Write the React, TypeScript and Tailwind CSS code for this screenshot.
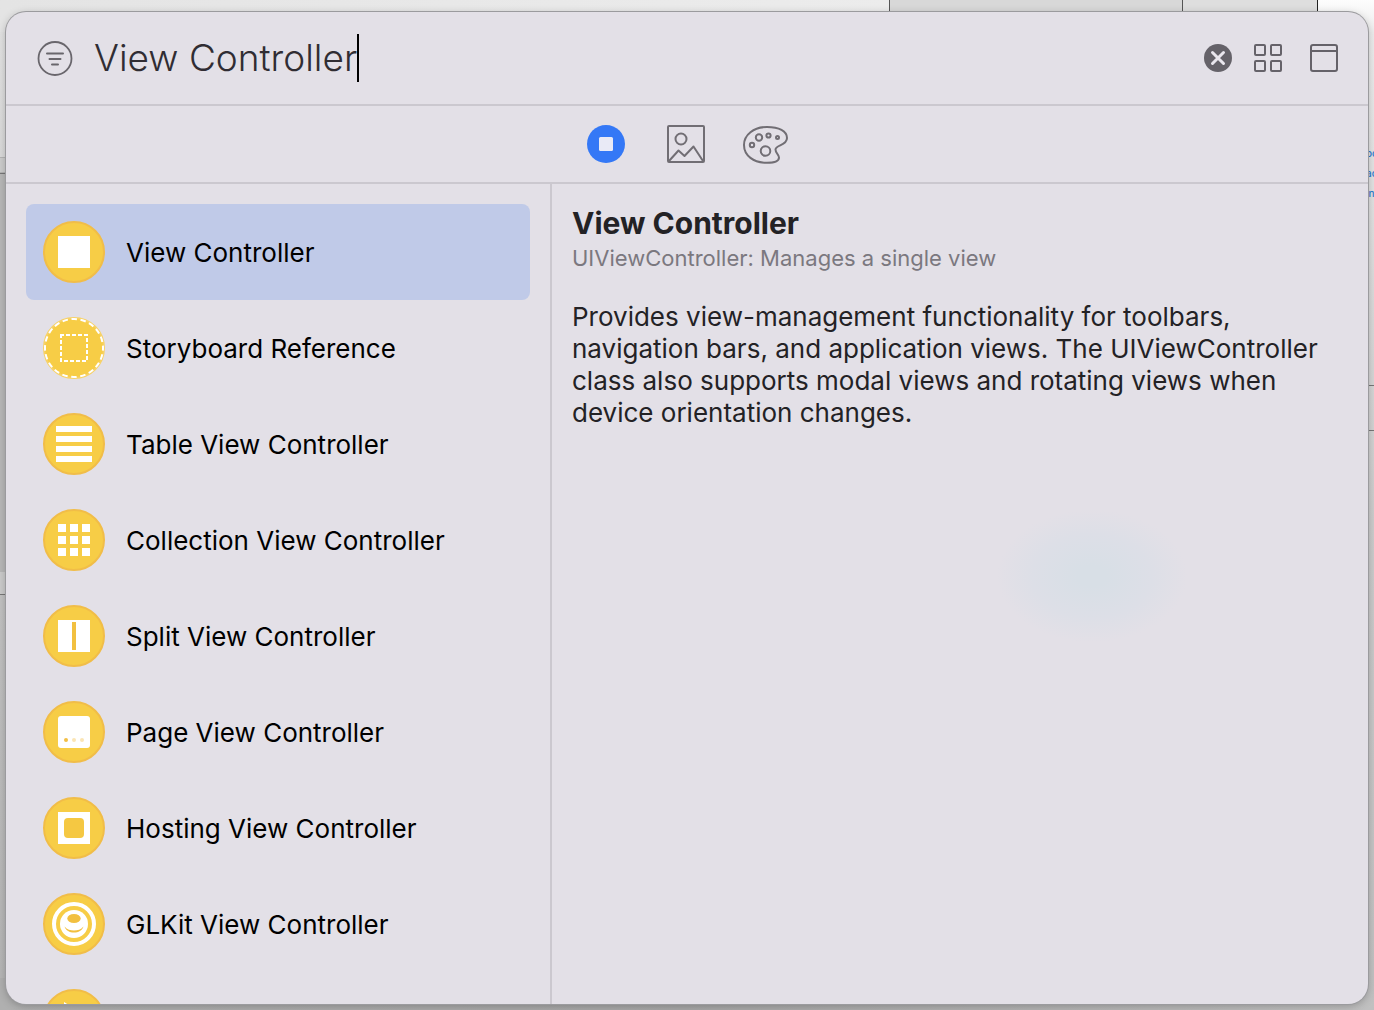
import { useState } from "react";
import type { ReactNode } from "react";

const items: { name: string; glyph: ReactNode; dashed?: boolean; iconOnly?: boolean }[] = [
  { name: "View Controller", glyph: <rect x="16" y="16" width="32" height="32" fill="#fff" /> },
  {
    name: "Storyboard Reference",
    dashed: true,
    glyph: (
      <rect x="19" y="19" width="26" height="26" fill="none" stroke="#fff" strokeWidth="2" strokeDasharray="4 2" strokeDashoffset="1" />
    ),
  },
  {
    name: "Table View Controller",
    glyph: <path d="M14 14h36v6H14zM14 24h36v6H14zM14 34h36v6H14zM14 44h36v6H14z" fill="#fff" />,
  },
  {
    name: "Collection View Controller",
    glyph: (
      <path
        d="M16 16h8v8h-8zM28 16h8v8h-8zM40 16h8v8h-8zM16 28h8v8h-8zM28 28h8v8h-8zM40 28h8v8h-8zM16 40h8v8h-8zM28 40h8v8h-8zM40 40h8v8h-8z"
        fill="#fff"
      />
    ),
  },
  {
    name: "Split View Controller",
    glyph: (
      <>
        <rect x="16" y="16" width="32" height="32" fill="#fff" />
        <rect x="30" y="18" width="4" height="28" fill="#f2c040" />
      </>
    ),
  },
  {
    name: "Page View Controller",
    glyph: (
      <>
        <rect x="16" y="16" width="32" height="32" rx="3" fill="#fff" />
        <circle cx="24" cy="40" r="2" fill="#f2bf45" />
        <circle cx="32" cy="40" r="2" fill="#fbe5b5" />
        <circle cx="40" cy="40" r="2" fill="#fbe5b5" />
      </>
    ),
  },
  {
    name: "Hosting View Controller",
    glyph: (
      <>
        <rect x="16" y="16" width="32" height="32" fill="#fff" />
        <rect x="22" y="22" width="20" height="20" rx="4" fill="#f5c842" />
      </>
    ),
  },
  {
    name: "GLKit View Controller",
    glyph: (
      <>
        <circle cx="32" cy="32" r="20" fill="none" stroke="#fff" strokeWidth="4" />
        <circle cx="32" cy="32" r="14" fill="#fff" />
        <ellipse cx="32" cy="26.500" rx="6.700" ry="4.500" fill="#f2c040" />
        <path d="M22.500 34.500c2.500 3 6 4 9.500 4s7-1 9.500-4c-1.500 4-5 6-9.500 6s-8-2-9.500-6z" fill="#f2c040" />
      </>
    ),
  },
  {
    name: "AVKit Player View Controller",
    iconOnly: true,
    glyph: <path d="M22 14l28 18-28 18z" fill="#fff" />,
  },
];

function Backdrop() {
  return (
    <div aria-hidden="true" className="absolute inset-0 overflow-hidden bg-linear-to-b from-[#e4e4e4] via-[#c4c4c4] to-[#b5b5b5]">
      <div className="absolute inset-x-0 top-0 flex h-8">
        <div className="flex-1 bg-linear-to-r from-[#e4e4e4] to-[#ececec]" />
        <div className="w-[294px] border-x border-[#555] bg-[#d8d8d8]" />
        <div className="w-[135px] border-r border-[#222] bg-[#dedede]" />
        <div className="w-14 bg-linear-to-b from-[#fdfdfd] to-[#ededed]" />
      </div>
      <div className="absolute top-[157px] left-0 h-4 w-2 border-y border-[#b4b4b4] bg-[#cccccc]" />
      <div className="absolute top-[173px] left-0 h-[399px] w-2 border-t border-[#777] bg-[#b8b8b8]" />
      <div className="absolute top-[572px] left-0 h-[23px] w-2 border-b border-[#777] bg-[#cbcbcb]" />
      <div className="absolute inset-x-0 bottom-0 h-8 bg-linear-to-r from-[#b0b0b0] via-[#a8a8a8] to-[#c0c0c0]" />
      <div className="absolute top-8 right-0 bottom-0 w-2 bg-linear-to-b from-[#ececec] via-[#cccccc] to-[#c0c0c0]" />
      <div className="absolute top-[385px] right-0 h-[46px] w-2 border-y border-[#777]" />
      <div className="absolute top-[143px] right-0 w-2 overflow-hidden text-[10px] leading-5 font-medium text-[#2b7bd0]">
        <p>oc</p>
        <p>ac</p>
        <p>in</p>
      </div>
    </div>
  );
}

function ItemIcon({ dashed, children }: { dashed?: boolean; children: ReactNode }) {
  return (
    <svg className="size-16 shrink-0" viewBox="0 0 64 64" aria-hidden="true">
      <circle cx="32" cy="32" r="30" fill="#f7cd46" stroke={dashed ? "#f7d268" : "#f1bd48"} strokeWidth="2" />
      {dashed && (
        <circle cx="32" cy="32" r="29" fill="none" stroke="#fff" strokeWidth="2" strokeDasharray="5.500 3.610" strokeDashoffset="2.750" />
      )}
      {children}
    </svg>
  );
}

export default function App() {
  const [query, setQuery] = useState("View Controller");
  const [selected, setSelected] = useState(0);

  return (
    <div className="relative h-screen px-1.5 pt-3 pb-1.5 font-['Inter',sans-serif]">
      <Backdrop />
      <main className="relative flex h-full flex-col overflow-hidden rounded-[20px] bg-[#e3e0e7] shadow-[0_0_0_1px_#9b9b9e,0_2px_8px_rgba(0,0,0,0.25)]">
        <header className="flex h-[94px] shrink-0 items-center border-b-2 border-[#cbc8cf] pr-[30px] pl-[31px]">
          <label htmlFor="library-search" className="shrink-0" aria-label="Filter library">
            <svg className="size-9" viewBox="0 0 36 36" fill="none" stroke="#69666c" strokeWidth="2" strokeLinecap="round">
              <circle cx="18" cy="18.500" r="16.500" strokeWidth="1.800" />
              <path d="M10 13.500h16M12.500 19h11M15 24.500h6" />
            </svg>
          </label>
          <div className="flex min-w-0 flex-1 items-center pl-[21px]">
            <input
              id="library-search"
              value={query}
              onChange={(e) => setQuery(e.target.value)}
              className="field-sizing-content h-12 min-w-0 bg-transparent text-[37px] font-light text-[#302d33] caret-transparent outline-none"
            />
            <span aria-hidden="true" className="h-12 w-0.5 shrink-0 bg-black" />
          </div>
          <div className="flex shrink-0 items-center">
            <button type="button" aria-label="Clear search" onClick={() => setQuery("")}>
              <svg className="size-7" viewBox="0 0 28 28">
                <circle cx="14" cy="14" r="14" fill="#656269" />
                <path d="M8.500 8.500l11 11M19.500 8.500l-11 11" stroke="#e9e6ed" strokeWidth="3" strokeLinecap="round" />
              </svg>
            </button>
            <button type="button" aria-label="Grid view" className="ml-[22px]">
              <svg className="size-7" viewBox="0 0 28 28" fill="none" stroke="#656269" strokeWidth="2">
                <rect x="1" y="1" width="10" height="10" rx="1" />
                <rect x="17" y="1" width="10" height="10" rx="1" />
                <rect x="1" y="17" width="10" height="10" rx="1" />
                <rect x="17" y="17" width="10" height="10" rx="1" />
              </svg>
            </button>
            <button type="button" aria-label="Toggle details" className="ml-7">
              <svg className="size-7" viewBox="0 0 28 28" fill="none" stroke="#656269" strokeWidth="2">
                <rect x="1" y="1" width="26" height="26" rx="2" />
                <path d="M1 7h26" />
              </svg>
            </button>
          </div>
        </header>

        <nav aria-label="Library sections" className="flex h-[78px] shrink-0 items-center justify-center gap-8 border-b-2 border-[#cbc8cf] pr-0.5">
          <button type="button" aria-label="Objects" aria-pressed="true">
            <svg className="h-10 w-12" viewBox="0 0 48 40">
              <circle cx="24" cy="20" r="19" fill="#3478f6" />
              <rect x="17" y="13" width="14" height="14" rx="1.500" fill="#e9eaf6" />
            </svg>
          </button>
          <button type="button" aria-label="Images">
            <svg className="h-10 w-12" viewBox="0 0 48 40" fill="none" stroke="#716e74" strokeWidth="2" strokeLinejoin="round">
              <rect x="6" y="2" width="36" height="36" rx="1" />
              <circle cx="19" cy="15" r="5.500" />
              <path d="M7 37l9.500-10.500 6 5.500 9-9.500L41 37" />
            </svg>
          </button>
          <button type="button" aria-label="Colors">
            <svg className="h-10 w-12" viewBox="0 0 48 40" fill="none" stroke="#716e74" strokeWidth="2">
              <path d="M25 3C11.500 3 2 11 2 21c0 10.500 9.500 17.800 23 17.800 8 0 12-2 12-5.300 0-3.500-3.500-4-3.500-8 0-5 11.500-3.500 11.500-11.500C45 7 37 3 25 3z" />
              <circle cx="17" cy="13.500" r="3.200" />
              <circle cx="26.500" cy="11.500" r="2.100" />
              <circle cx="35.500" cy="13.500" r="1.500" />
              <circle cx="10" cy="21" r="2.200" />
              <circle cx="23.500" cy="27" r="4.800" />
            </svg>
          </button>
        </nav>

        <div className="flex min-h-0 flex-1">
          <ul className="w-[546px] shrink-0 overflow-hidden border-r-2 border-[#cbc8cf] p-5">
            {items.map((item, i) => (
              <li key={item.name}>
                <button
                  type="button"
                  aria-label={item.name}
                  onClick={() => setSelected(i)}
                  className={
                    i === selected
                      ? "flex h-24 w-full items-center gap-5 rounded-lg bg-[#c0cae8] px-4 text-left text-[26px] text-black"
                      : "flex h-24 w-full items-center gap-5 rounded-lg px-4 text-left text-[26px] text-black"
                  }
                >
                  <ItemIcon dashed={item.dashed}>{item.glyph}</ItemIcon>
                  {!item.iconOnly && <span className="whitespace-nowrap">{item.name}</span>}
                </button>
              </li>
            ))}
          </ul>
          <section className="relative min-w-0 flex-1 px-5 pt-5">
            <div aria-hidden="true" className="absolute top-[322px] left-[440px] h-[140px] w-[200px] bg-[radial-gradient(closest-side,#d8dfe6_15%,#dddfe7_60%,transparent_95%)]" />
            <h1 className="text-[30px] leading-[38px] font-bold text-[#232225]">View Controller</h1>
            <p className="text-[22px] leading-8 text-[#7b787f]">UIViewController: Manages a single view</p>
            <p className="mt-[27px] text-[26px] leading-8 text-[#232225]">
              Provides view-management functionality for toolbars, navigation bars, and application views. The UIViewController class also
              supports modal views and rotating views when device orientation changes.
            </p>
          </section>
        </div>
      </main>
    </div>
  );
}
